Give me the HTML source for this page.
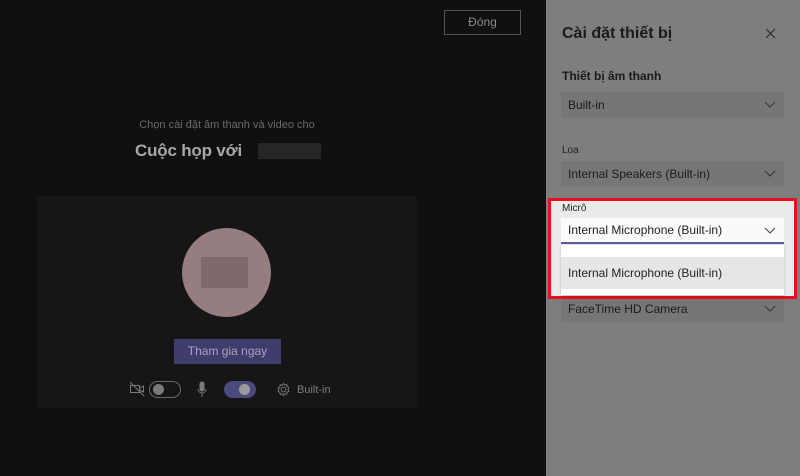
<!DOCTYPE html>
<html><head><meta charset="utf-8"><style>
*{margin:0;padding:0;box-sizing:border-box}
body{width:800px;height:476px;overflow:hidden;background:#101011;font-family:"Liberation Sans",sans-serif;position:relative}
.a{position:absolute}
.dd{position:absolute;left:561px;width:223px;height:26px;background:#767676;color:#1a1a1a;font-size:12px;line-height:26px;padding-left:7px}
.chev{position:absolute;right:8px;top:9px;width:12px;height:8px}
</style></head><body>
<div class="a" style="left:444px;top:10px;width:77px;height:25px;border:1px solid #555;color:#8a8a8a;font-size:12px;text-align:center;line-height:23px">Đóng</div>
<div class="a" style="left:0;width:454px;top:119px;text-align:center;color:#6a6a6a;font-size:11px">Chọn cài đặt âm thanh và video cho</div>
<div class="a" style="left:135px;top:141px;color:#a8a8a8;font-size:17px;font-weight:bold;letter-spacing:-0.2px">Cuộc họp với</div>
<div class="a" style="left:258px;top:143px;width:63px;height:16px;background:#262626"></div>
<div class="a" style="left:37px;top:196px;width:380px;height:212px;background:#161617"></div>
<div class="a" style="left:182px;top:228px;width:89px;height:89px;border-radius:50%;background:#957d80"></div>
<div class="a" style="left:201px;top:257px;width:47px;height:31px;background:#80696c"></div>
<div class="a" style="left:174px;top:339px;width:107px;height:25px;background:#3f3d6b;color:#a4a4c0;font-size:12px;text-align:center;line-height:25px">Tham gia ngay</div>
<svg class="a" style="left:129px;top:381px" width="16" height="16" viewBox="0 0 16 16" fill="none" stroke="#7a7a7a" stroke-width="1"><rect x="1.5" y="4.5" width="9" height="7"/><path d="M10.5 7l4-2v6l-4-2M1 1l14 14"/></svg>
<div class="a" style="left:149px;top:381px;width:32px;height:17px;border:1.5px solid #6a6a6a;border-radius:9px"></div>
<div class="a" style="left:153px;top:384px;width:11px;height:11px;border-radius:50%;background:#7a7a7a"></div>
<svg class="a" style="left:196px;top:381px" width="12" height="17" viewBox="0 0 12 17" fill="none" stroke="#7a7a7a"><rect x="4" y="1" width="4" height="9" rx="2" fill="#7a7a7a"/><path d="M2 8a4 4 0 0 0 8 0M6 12v4"/></svg>
<div class="a" style="left:224px;top:381px;width:32px;height:17px;background:#4b4a7e;border-radius:9px"></div>
<div class="a" style="left:239px;top:384px;width:11px;height:11px;border-radius:50%;background:#9a9a9a"></div>
<svg class="a" style="left:276px;top:382px" width="15" height="15" viewBox="0 0 16 16" fill="none" stroke="#7a7a7a"><circle cx="8" cy="8" r="2.5"/><path d="M8 1.5l1.3 1.8 2.2-.6.3 2.2 2 1-1 2 1 2-2 1-.3 2.2-2.2-.6L8 14.5l-1.3-1.8-2.2.6-.3-2.2-2-1 1-2-1-2 2-1 .3-2.2 2.2.6z"/></svg>
<div class="a" style="left:297px;top:384px;color:#7d7d7d;font-size:11px">Built-in</div>

<div class="a" style="left:546px;top:0;width:254px;height:476px;background:#7e7e7e"></div>
<div class="a" style="left:562px;top:25px;color:#1a1a1a;font-size:16px;font-weight:bold">Cài đặt thiết bị</div>
<svg class="a" style="left:765px;top:28px" width="11" height="11" viewBox="0 0 11 11" stroke="#2a2a2a" stroke-width="1.1"><path d="M1 1l9 9M10 1l-9 9"/></svg>
<div class="a" style="left:562px;top:69px;color:#1a1a1a;font-size:12px;font-weight:bold">Thiết bị âm thanh</div>
<div class="dd" style="top:92px">Built-in<svg class="chev" viewBox="0 0 12 8" fill="none" stroke="#333"><path d="M1 1l5 5 5-5"/></svg></div>
<div class="a" style="left:562px;top:145px;color:#222;font-size:10px">Loa</div>
<div class="dd" style="top:161px">Internal Speakers (Built-in)<svg class="chev" viewBox="0 0 12 8" fill="none" stroke="#333"><path d="M1 1l5 5 5-5"/></svg></div>
<div class="dd" style="top:296px">FaceTime HD Camera<svg class="chev" viewBox="0 0 12 8" fill="none" stroke="#333"><path d="M1 1l5 5 5-5"/></svg></div>

<div class="a" style="left:548px;top:198px;width:249px;height:101px;background:#ebebeb;border:3px solid #e8101e"></div>
<div class="a" style="left:562px;top:203px;color:#222;font-size:10px">Micrô</div>
<div class="dd" style="top:218px;background:#fafafa;border-bottom:2px solid #5b59a0;height:26px;line-height:25px;color:#222">Internal Microphone (Built-in)<svg class="chev" viewBox="0 0 12 8" fill="none" stroke="#444"><path d="M1 1l5 5 5-5"/></svg></div>
<div class="a" style="left:561px;top:245px;width:223px;height:50px;background:#fff;box-shadow:0 1px 3px rgba(0,0,0,.2)"></div>
<div class="a" style="left:561px;top:257px;width:223px;height:32px;background:#e6e6e6;color:#222;font-size:12px;line-height:32px;padding-left:7px">Internal Microphone (Built-in)</div>
</body></html>
